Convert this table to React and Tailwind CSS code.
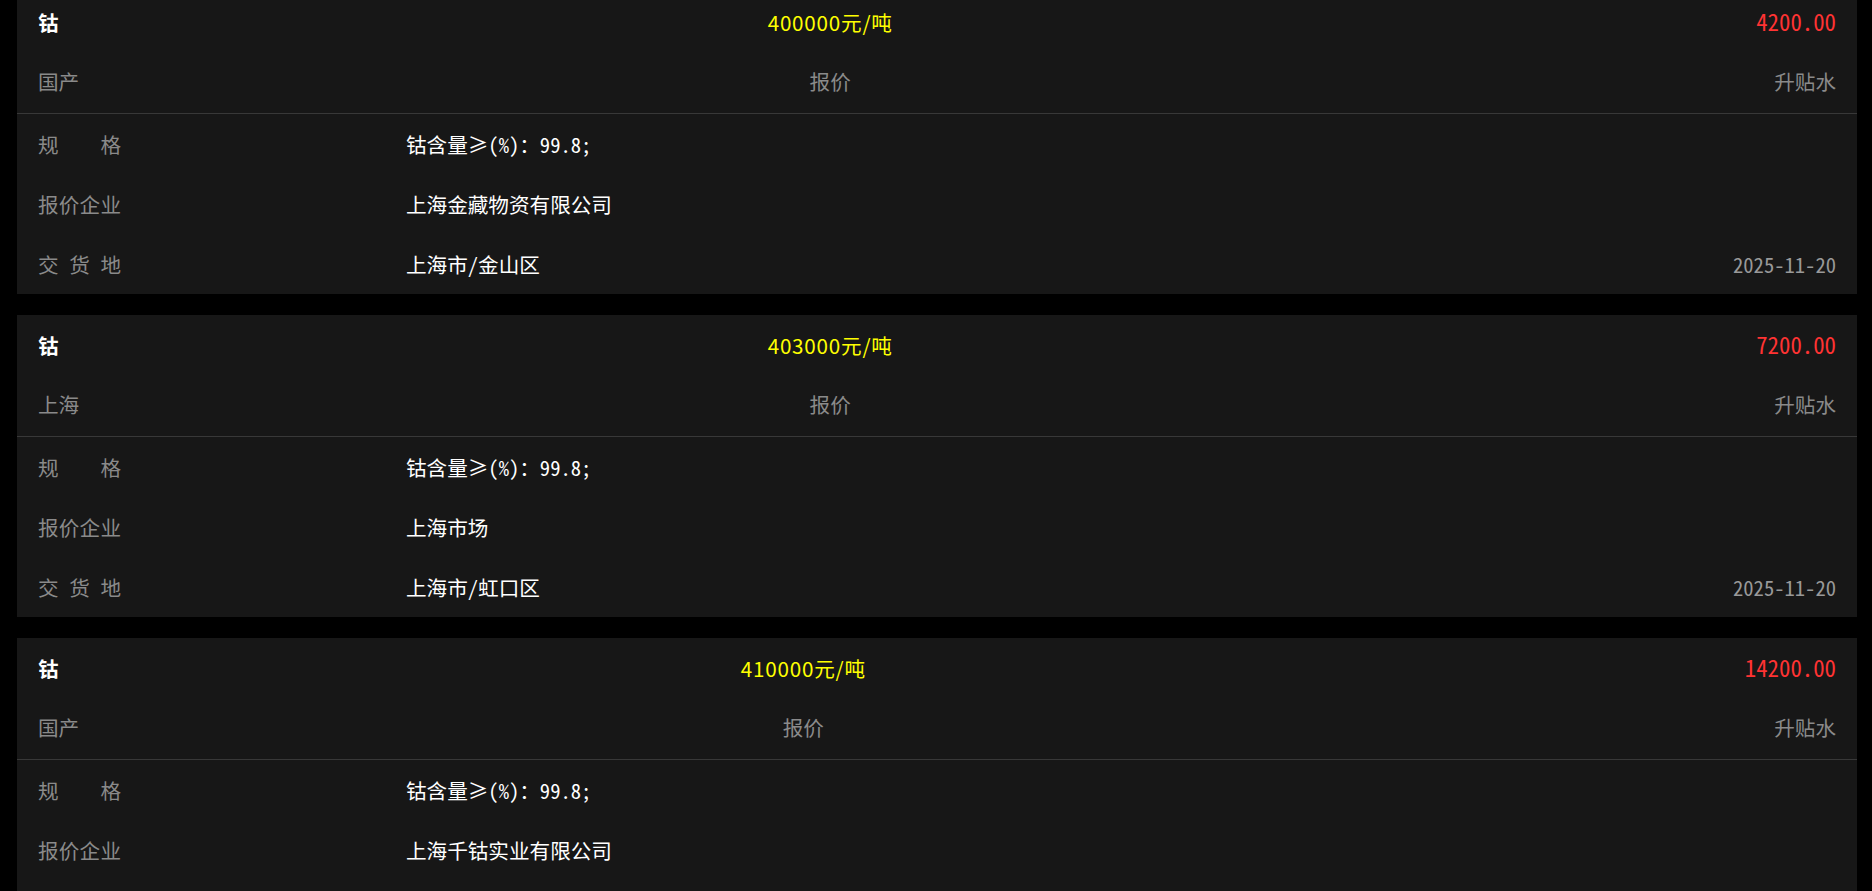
const quotes = [
  {
    name: '钴',
    origin: '国产',
    price: '400000元/吨',
    premium: '4200.00',
    spec: '钴含量≥(%)：99.8;',
    company: '上海金藏物资有限公司',
    place: '上海市/金山区',
    date: '2025-11-20',
  },
  {
    name: '钴',
    origin: '上海',
    price: '403000元/吨',
    premium: '7200.00',
    spec: '钴含量≥(%)：99.8;',
    company: '上海市场',
    place: '上海市/虹口区',
    date: '2025-11-20',
  },
  {
    name: '钴',
    origin: '国产',
    price: '410000元/吨',
    premium: '14200.00',
    spec: '钴含量≥(%)：99.8;',
    company: '上海千钴实业有限公司',
    place: '上海市/宝山区',
    date: '2025-11-20',
  },
];

const MONO = "font-['Noto_Sans_Mono_CJK_SC','Noto_Sans_CJK_SC',monospace]";

function InfoRow({ label, value, extra }) {
  return (
    <div className="h-[60px] flex items-center">
      <div className="w-[368px] shrink-0">
        <span className="inline-block w-[83px] whitespace-nowrap text-[#8a8a8a] [text-align-last:justify]">{label}</span>
      </div>
      <div className={`flex-1 whitespace-nowrap text-white font-medium ${MONO}`}>{value}</div>
      {extra && <div className={`text-[#999999] ${MONO}`}>{extra}</div>}
    </div>
  );
}

function QuoteCard({ q }) {
  return (
    <div className="bg-[#171717]">
      <div className="border-b border-[#383838] px-[7px]">
        <table className="w-full">
          <tbody>
            <tr className="h-[61px]">
              <td className="px-[14px] text-left whitespace-nowrap text-white font-bold">{q.name}</td>
              <td className="px-[14px] text-center whitespace-nowrap text-[#ffff00] tracking-[0.8px]">{q.price}</td>
              <td className={`px-[14px] text-right whitespace-nowrap text-[#ff3333] text-[22.8px] ${MONO}`}>{q.premium}</td>
            </tr>
            <tr className="h-[60px]">
              <td className="px-[14px] pb-[3px] text-left whitespace-nowrap text-[#8a8a8a]">{q.origin}</td>
              <td className="px-[14px] pb-[3px] text-center whitespace-nowrap text-[#8a8a8a]">报价</td>
              <td className="px-[14px] pb-[3px] text-right whitespace-nowrap text-[#8a8a8a]">升贴水</td>
            </tr>
          </tbody>
        </table>
      </div>
      <div className="px-[21px]">
        <InfoRow label="规格" value={q.spec} />
        <InfoRow label="报价企业" value={q.company} />
        <InfoRow label="交货地" value={q.place} extra={q.date} />
      </div>
    </div>
  );
}

export default function App() {
  return (
    <div className="h-[891px] overflow-hidden bg-black pl-[17px] pr-[15px] text-[20.6px] leading-none font-['Noto_Sans_CJK_SC',sans-serif]">
      <div className="-mt-[8px] flex flex-col gap-[21px]">
        {quotes.map((q, i) => (
          <QuoteCard key={i} q={q} />
        ))}
      </div>
    </div>
  );
}
